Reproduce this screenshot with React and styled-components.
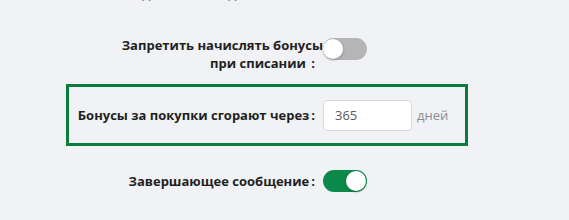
import React from "react";
import styled, { createGlobalStyle } from "styled-components";

const Global = createGlobalStyle`
  html, body { margin: 0; padding: 0; background: #f0f2f5; }
  body { font-family: "Open Sans", "Noto Sans", sans-serif; color: #1f1f1f; }
`;

const Page = styled.div`
  width: 569px;
  height: 220px;
  overflow: hidden;
  background: #f0f2f5;
  display: flex;
  flex-direction: column;
`;

const CutLine = styled.div`
  margin-top: -16px;
  height: 18px;
  line-height: 18px;
  font-size: 13px;
  font-weight: 700;
  padding-left: 142px;
  white-space: nowrap;
`;

const Row = styled.div`
  display: flex;
  align-items: ${(p) => p.$align || "center"};
  margin-top: ${(p) => p.$mt || 0}px;
`;

const Label = styled.div`
  width: ${(p) => p.$w}px;
  flex: none;
  text-align: right;
  font-size: 13px;
  font-weight: 700;
  line-height: 18px;
  color: #1f1f1f;
  white-space: nowrap;
`;

const Colon = styled.span`
  margin: 0 8px 0 2px;
`;

const Highlight = styled.div`
  margin-left: 66px;
  margin-top: 12px;
  width: 402px;
  height: 62px;
  box-sizing: border-box;
  border: 3px solid #0a7d3d;
  padding-left: 7px;
  display: flex;
  align-items: center;
`;

const Input = styled.input`
  width: 89px;
  height: 31px;
  box-sizing: border-box;
  border: 1px solid #d9d9d9;
  border-radius: 4px;
  background: #fff;
  padding: 0 11px;
  font-family: "Open Sans", sans-serif;
  font-size: 13px;
  color: #595959;
  outline: none;
`;

const Suffix = styled.span`
  margin-left: 5px;
  font-size: 13px;
  color: #8c8c8c;
`;

const Switch = styled.button`
  position: relative;
  width: 44px;
  height: 22px;
  border: none;
  border-radius: 11px;
  padding: 0;
  flex: none;
  margin-top: ${(p) => p.$mt || 0}px;
  background: ${(p) => (p.$on ? "#0b8a4b" : "#b5b5b5")};
  cursor: pointer;
  &::after {
    content: "";
    position: absolute;
    top: 1px;
    left: ${(p) => (p.$on ? "23px" : "0px")};
    width: 20px;
    height: 20px;
    border-radius: 50%;
    background: #fff;
    box-shadow: 0 1px 3px rgba(0, 0, 0, 0.25);
  }
`;

export default function App() {
  return (
    <>
      <Global />
      <Page>
        <CutLine>данные о её доставке</CutLine>
        <Row $align="flex-start" $mt={34}>
          <Label $w={323}>
            Запретить начислять бонусы
            <br />
            при списании <Colon>:</Colon>
          </Label>
          <Switch $on={false} $mt={2} />
        </Row>
        <Highlight>
          <Label $w={247}>
            Бонусы за покупки сгорают через<Colon>:</Colon>
          </Label>
          <Input defaultValue="365" />
          <Suffix>дней</Suffix>
        </Highlight>
        <Row $mt={24}>
          <Label $w={323}>
            Завершающее сообщение<Colon>:</Colon>
          </Label>
          <Switch $on />
        </Row>
      </Page>
    </>
  );
}
